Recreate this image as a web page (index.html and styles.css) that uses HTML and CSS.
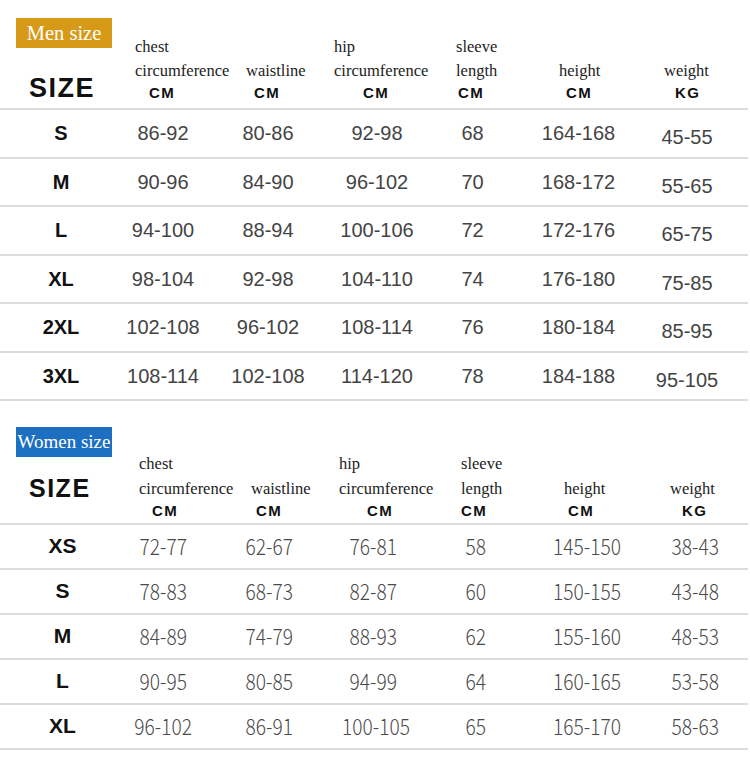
FILE: index.html
```html
<!DOCTYPE html>
<html>
<head>
<meta charset="utf-8">
<link rel="stylesheet" href="styles.css">
</head>
<body>
<div class="chart men">
  <div class="head">
    <div class="hcell first"><div class="badge gold">Men size</div><div class="size-title">SIZE</div></div>
    <div class="hcell"><span class="t">chest</span><span class="t">circumference</span><span class="cm o14">CM</span></div>
    <div class="hcell"><span class="t">waistline</span><span class="cm o8">CM</span></div>
    <div class="hcell"><span class="t">hip</span><span class="t">circumference</span><span class="cm o29">CM</span></div>
    <div class="hcell"><span class="t">sleeve</span><span class="t">length</span><span class="cm o2">CM</span></div>
    <div class="hcell"><span class="t">height</span><span class="cm o7">CM</span></div>
    <div class="hcell"><span class="t">weight</span><span class="cm o11">KG</span></div>
  </div>
  <div class="row"><div class="c sz">S</div><div class="c">86-92</div><div class="c">80-86</div><div class="c">92-98</div><div class="c">68</div><div class="c">164-168</div><div class="c w">45-55</div></div>
  <div class="row"><div class="c sz">M</div><div class="c">90-96</div><div class="c">84-90</div><div class="c">96-102</div><div class="c">70</div><div class="c">168-172</div><div class="c w">55-65</div></div>
  <div class="row"><div class="c sz">L</div><div class="c">94-100</div><div class="c">88-94</div><div class="c">100-106</div><div class="c">72</div><div class="c">172-176</div><div class="c w">65-75</div></div>
  <div class="row"><div class="c sz">XL</div><div class="c">98-104</div><div class="c">92-98</div><div class="c">104-110</div><div class="c">74</div><div class="c">176-180</div><div class="c w">75-85</div></div>
  <div class="row"><div class="c sz">2XL</div><div class="c">102-108</div><div class="c">96-102</div><div class="c">108-114</div><div class="c">76</div><div class="c">180-184</div><div class="c w">85-95</div></div>
  <div class="row"><div class="c sz">3XL</div><div class="c">108-114</div><div class="c">102-108</div><div class="c">114-120</div><div class="c">78</div><div class="c">184-188</div><div class="c w">95-105</div></div>
</div>

<div class="chart women">
  <div class="head">
    <div class="hcell first"><div class="badge blue">Women size</div><div class="size-title">SIZE</div></div>
    <div class="hcell"><span class="t">chest</span><span class="t">circumference</span><span class="cm o13">CM</span></div>
    <div class="hcell"><span class="t">waistline</span><span class="cm o5">CM</span></div>
    <div class="hcell"><span class="t">hip</span><span class="t">circumference</span><span class="cm o28">CM</span></div>
    <div class="hcell"><span class="t">sleeve</span><span class="t">length</span><span class="cm o0">CM</span></div>
    <div class="hcell"><span class="t">height</span><span class="cm o4">CM</span></div>
    <div class="hcell"><span class="t">weight</span><span class="cm o12">KG</span></div>
  </div>
  <div class="row"><div class="c sz">XS</div><div class="c"><span>72-77</span></div><div class="c"><span>62-67</span></div><div class="c"><span>76-81</span></div><div class="c"><span>58</span></div><div class="c"><span>145-150</span></div><div class="c"><span>38-43</span></div></div>
  <div class="row"><div class="c sz">S</div><div class="c"><span>78-83</span></div><div class="c"><span>68-73</span></div><div class="c"><span>82-87</span></div><div class="c"><span>60</span></div><div class="c"><span>150-155</span></div><div class="c"><span>43-48</span></div></div>
  <div class="row"><div class="c sz">M</div><div class="c"><span>84-89</span></div><div class="c"><span>74-79</span></div><div class="c"><span>88-93</span></div><div class="c"><span>62</span></div><div class="c"><span>155-160</span></div><div class="c"><span>48-53</span></div></div>
  <div class="row"><div class="c sz">L</div><div class="c"><span>90-95</span></div><div class="c"><span>80-85</span></div><div class="c"><span>94-99</span></div><div class="c"><span>64</span></div><div class="c"><span>160-165</span></div><div class="c"><span>53-58</span></div></div>
  <div class="row"><div class="c sz">XL</div><div class="c"><span>96-102</span></div><div class="c"><span>86-91</span></div><div class="c"><span>100-105</span></div><div class="c"><span>65</span></div><div class="c"><span>165-170</span></div><div class="c"><span>58-63</span></div></div>
</div>
</body>
</html>
```
FILE: styles.css
```css
html, body {
  margin: 0;
  padding: 0;
  background: #fff;
}
body {
  width: 750px;
  overflow: hidden;
}
.chart {
  width: 748px;
}
.head {
  display: grid;
  border-bottom: 2px solid #dcdcdc;
}
.men .head {
  grid-template-columns: 135px 111px 88px 122px 103px 105px 84px;
  height: 108px;
}
.women .head {
  grid-template-columns: 139px 112px 88px 122px 103px 106px 78px;
  height: 122px;
}
.hcell {
  display: flex;
  flex-direction: column;
  justify-content: flex-end;
  align-items: flex-start;
  padding-bottom: 7px;
}
.women .hcell {
  padding-bottom: 4px;
}
.hcell.first {
  justify-content: flex-start;
  padding-bottom: 0;
}
.badge {
  width: 96px;
  height: 30px;
  margin-left: 16px;
  display: flex;
  align-items: center;
  justify-content: center;
  color: #fff;
  font-family: "Liberation Serif", serif;
  white-space: nowrap;
}
.badge.gold {
  background: #d69a18;
  font-size: 20.5px;
  margin-top: 18px;
}
.badge.blue {
  background: #1c6fc1;
  font-size: 19px;
  margin-top: 26px;
}
.size-title {
  margin-left: 29px;
  font-family: "Liberation Sans", sans-serif;
  font-weight: bold;
  color: #111;
  letter-spacing: 1.5px;
}
.men .size-title {
  font-size: 27px;
  line-height: 28px;
  margin-top: 26px;
}
.women .size-title {
  font-size: 25px;
  line-height: 26px;
  margin-top: 18px;
}
.t {
  font-family: "Liberation Serif", serif;
  font-size: 16.5px;
  line-height: 24px;
  color: #222;
  white-space: nowrap;
}
.women .t {
  line-height: 25px;
}
.cm {
  font-family: "Liberation Sans", sans-serif;
  font-weight: bold;
  font-size: 15px;
  line-height: 16px;
  letter-spacing: 1.5px;
  margin-top: 2px;
  color: #111;
  white-space: nowrap;
}
.o0 { margin-left: 0; }
.o2 { margin-left: 2px; }
.o4 { margin-left: 4px; }
.o5 { margin-left: 5px; }
.o7 { margin-left: 7px; }
.o8 { margin-left: 8px; }
.o11 { margin-left: 11px; }
.o12 { margin-left: 12px; }
.o13 { margin-left: 13px; }
.o14 { margin-left: 14px; }
.o28 { margin-left: 28px; }
.o29 { margin-left: 29px; }

.row {
  display: grid;
  align-items: center;
  border-bottom: 2px solid #dcdcdc;
  text-align: center;
}
.men .row {
  grid-template-columns: 122px 82px 128px 90px 101px 111px 106px;
  height: 46.5px;
}
.women .row {
  grid-template-columns: 125px 76px 136px 73px 132px 90px 116px;
  height: 43px;
}
.c {
  white-space: nowrap;
}
.men .c {
  font-family: "Liberation Sans", sans-serif;
  font-size: 20px;
  line-height: 1;
  color: #444;
}
.men .c.w {
  padding-top: 8px;
}
.women .c {
  font-family: "Noto Sans CJK SC", "Noto Sans", sans-serif;
  font-weight: 300;
  font-size: 22px;
  line-height: 1;
  color: #4a4a4a;
  padding-bottom: 4px;
}
.women .c:last-child {
  padding-left: 10px;
}
.women .c span {
  display: inline-block;
  transform: scaleX(0.87);
}
.men .sz, .women .sz {
  font-family: "Liberation Sans", sans-serif;
  font-weight: bold;
  color: #111;
}
.men .sz {
  font-size: 20px;
}
.women .sz {
  font-size: 21px;
  padding-bottom: 2px;
}
```
